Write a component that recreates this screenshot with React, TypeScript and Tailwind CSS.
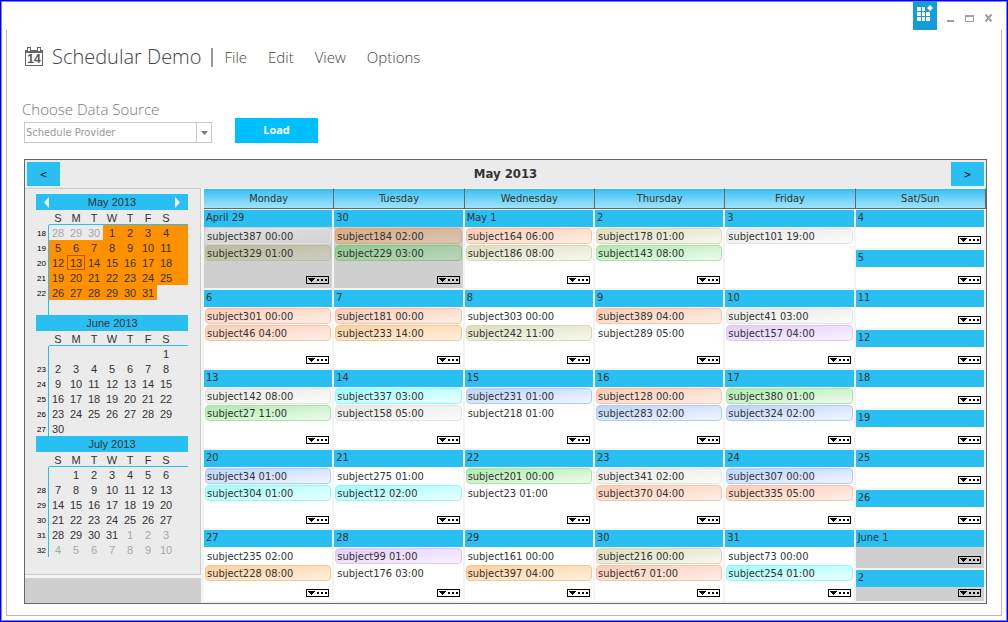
import React from "react";

type Tone =
  | "none" | "gray" | "peach" | "olive" | "green" | "orange" | "blue" | "cyan" | "violet"
  | "pastGray" | "pastOlive" | "pastOrange" | "pastGreen";

type Entry = [label: string, tone: Tone];
type Day = { label: string; entries: Entry[]; muted?: boolean; hideMore?: boolean };

const tones: Record<Tone, string> = {
  none: "border-transparent",
  gray: "border-[#e4e4de] bg-linear-to-br from-[#e9e9e5] to-[#fbfbfb]",
  peach: "border-[#ffc0a4] bg-linear-to-br from-[#ffcbb5] to-[#fff0ea]",
  olive: "border-[#d9d9b4] bg-linear-to-br from-[#dedebe] to-[#f8f8f1]",
  green: "border-[#a5e6a5] bg-linear-to-br from-[#aeeaae] to-[#effbef]",
  orange: "border-[#ffc489] bg-linear-to-br from-[#ffcf9c] to-[#fff1e2]",
  blue: "border-[#b0cbf5] bg-linear-to-br from-[#bdd3f8] to-[#f1f6fe]",
  cyan: "border-[#8ff9fa] bg-linear-to-br from-[#9cfdfd] to-[#eaffff]",
  violet: "border-[#dfc8f8] bg-linear-to-br from-[#e3cffa] to-[#f8f2fe]",
  pastGray: "border-[#e4e4e4] bg-linear-to-br from-[#e0e0e0] to-[#d3d3d3]",
  pastOlive: "border-[#bdbd98] bg-linear-to-br from-[#bcbc98] to-[#cdcdc6]",
  pastOrange: "border-[#e0a878] bg-linear-to-br from-[#e0ab7c] to-[#d3c7bc]",
  pastGreen: "border-[#84c884] bg-linear-to-br from-[#8dcd8d] to-[#c1d0c1]",
};

const weekdays = ["Monday", "Tuesday", "Wednesday", "Thursday", "Friday"];

const weeks: { days: Day[]; weekend: Day[] }[] = [
  {
    days: [
      { label: "April 29", muted: true, entries: [["subject387 00:00", "pastGray"], ["subject329 01:00", "pastOlive"]] },
      { label: "30", muted: true, entries: [["subject184 02:00", "pastOrange"], ["subject229 03:00", "pastGreen"]] },
      { label: "May 1", entries: [["subject164 06:00", "peach"], ["subject186 08:00", "olive"]] },
      { label: "2", entries: [["subject178 01:00", "olive"], ["subject143 08:00", "green"]] },
      { label: "3", hideMore: true, entries: [["subject101 19:00", "gray"]] },
    ],
    weekend: [{ label: "4", entries: [] }, { label: "5", entries: [] }],
  },
  {
    days: [
      { label: "6", entries: [["subject301 00:00", "peach"], ["subject46 04:00", "peach"]] },
      { label: "7", entries: [["subject181 00:00", "peach"], ["subject233 14:00", "orange"]] },
      { label: "8", entries: [["subject303 00:00", "none"], ["subject242 11:00", "olive"]] },
      { label: "9", entries: [["subject389 04:00", "peach"], ["subject289 05:00", "none"]] },
      { label: "10", entries: [["subject41 03:00", "gray"], ["subject157 04:00", "violet"]] },
    ],
    weekend: [{ label: "11", entries: [] }, { label: "12", entries: [] }],
  },
  {
    days: [
      { label: "13", entries: [["subject142 08:00", "gray"], ["subject27 11:00", "green"]] },
      { label: "14", entries: [["subject337 03:00", "cyan"], ["subject158 05:00", "gray"]] },
      { label: "15", entries: [["subject231 01:00", "blue"], ["subject218 01:00", "none"]] },
      { label: "16", entries: [["subject128 00:00", "peach"], ["subject283 02:00", "blue"]] },
      { label: "17", entries: [["subject380 01:00", "green"], ["subject324 02:00", "blue"]] },
    ],
    weekend: [{ label: "18", entries: [] }, { label: "19", entries: [] }],
  },
  {
    days: [
      { label: "20", entries: [["subject34 01:00", "blue"], ["subject304 01:00", "cyan"]] },
      { label: "21", entries: [["subject275 01:00", "none"], ["subject12 02:00", "cyan"]] },
      { label: "22", entries: [["subject201 00:00", "green"], ["subject23 01:00", "none"]] },
      { label: "23", entries: [["subject341 02:00", "gray"], ["subject370 04:00", "peach"]] },
      { label: "24", entries: [["subject307 00:00", "blue"], ["subject335 05:00", "peach"]] },
    ],
    weekend: [{ label: "25", entries: [] }, { label: "26", entries: [] }],
  },
  {
    days: [
      { label: "27", entries: [["subject235 02:00", "none"], ["subject228 08:00", "orange"]] },
      { label: "28", entries: [["subject99 01:00", "violet"], ["subject176 03:00", "none"]] },
      { label: "29", entries: [["subject161 00:00", "none"], ["subject397 04:00", "orange"]] },
      { label: "30", entries: [["subject216 00:00", "olive"], ["subject67 01:00", "peach"]] },
      { label: "31", entries: [["subject73 00:00", "none"], ["subject254 01:00", "cyan"]] },
    ],
    weekend: [{ label: "June 1", muted: true, entries: [] }, { label: "2", muted: true, entries: [] }],
  },
];

type Month = { title: string; weekNumbers: string[]; cells: (number | null)[]; before: number; lastIndex: number; selected?: boolean };

const range = (a: number, b: number) => Array.from({ length: b - a + 1 }, (_, i) => a + i);
const blanks = (n: number): null[] => Array.from({ length: n }, () => null);

const months: Month[] = [
  { title: "May 2013", weekNumbers: ["18", "19", "20", "21", "22", ""], cells: [28, 29, 30, ...range(1, 31), ...blanks(8)], before: 3, lastIndex: 33, selected: true },
  { title: "June 2013", weekNumbers: ["", "23", "24", "25", "26", "27"], cells: [...blanks(6), ...range(1, 30), ...blanks(6)], before: 6, lastIndex: 35 },
  { title: "July 2013", weekNumbers: ["", "28", "29", "30", "31", "32"], cells: [null, ...range(1, 31), ...range(1, 10)], before: 1, lastIndex: 31 },
];

function MiniMonth({ month }: { month: Month }) {
  return (
    <section className="text-[#333]">
      <div className="flex h-4 items-center justify-between bg-[#29bff2] px-[6px] text-[11px] leading-4">
        {month.selected ? (
          <button aria-label="Previous month" className="h-4 w-2">
            <svg viewBox="0 0 8 16" className="h-4 w-2"><path d="M7 3v11L2 8.500z" fill="#fff" /></svg>
          </button>
        ) : <span className="w-2" />}
        <h2>{month.title}</h2>
        {month.selected ? (
          <button aria-label="Next month" className="h-4 w-2">
            <svg viewBox="0 0 8 16" className="h-4 w-2"><path d="M1 3v11l5-5.500z" fill="#fff" /></svg>
          </button>
        ) : <span className="w-2" />}
      </div>
      <table className="w-full table-fixed border-separate border-spacing-0 text-center text-[11px] leading-[13px]">
        <colgroup>
          <col className="w-[13px]" />
          {range(0, 6).map((i) => <col key={i} className="w-[18px]" />)}
          <col />
        </colgroup>
        <thead>
          <tr>
            <th className="h-[15px] p-0" />
            {["S", "M", "T", "W", "T", "F", "S"].map((d, i) => (
              <th key={i} className="h-[15px] border-b border-[#29bff2] p-0 pt-[2px] leading-3 font-normal">{d}</th>
            ))}
            <th className="border-b border-[#29bff2] p-0" />
          </tr>
        </thead>
        <tbody>
          {range(0, 5).map((r) => (
            <tr key={r}>
              <th className="h-[15px] border-r border-[#29bff2] p-0 pt-[2px] pl-px text-left text-[8px] leading-[13px] font-normal text-black">{month.weekNumbers[r]}</th>
              {range(0, 6).map((c) => {
                const i = r * 7 + c;
                const day = month.cells[i];
                const inside = i >= month.before && i <= month.lastIndex;
                const marked = month.selected && inside;
                const today = marked && day === 13;
                return (
                  <td
                    key={c}
                    className={`h-[15px] p-0 pt-[2px] ${marked ? "bg-[#ff9100]" : ""} ${inside ? "" : "text-[#a8a8a8]"} ${today ? "outline-1 -outline-offset-1 outline-[#c05000]" : ""}`}
                  >
                    {day}
                  </td>
                );
              })}
              <td className={`p-0 ${month.selected && r < 4 ? "bg-[#ff9100]" : ""}`} />
            </tr>
          ))}
        </tbody>
      </table>
    </section>
  );
}

function MoreButton({ day }: { day: string }) {
  return (
    <button aria-label={`More for ${day}`} className="block h-2 w-[23px]">
      <svg viewBox="0 0 23 8" className="h-2 w-[23px]" shapeRendering="crispEdges">
        <rect x="0.5" y="0.5" width="22" height="7" fill="none" stroke="#000" />
        <path d="M2 2h7v1H8v1H7v1H6v1H5V5H4V4H3V3H2zM11 3h2v2h-2zM15 3h2v2h-2zM19 3h2v2h-2z" fill="#000" />
      </svg>
    </button>
  );
}

function DayCell({ day, height }: { day: Day; height: string }) {
  return (
    <div className={`flex flex-col border-r-2 border-b-2 border-[#f4f4f4] ${height} ${day.muted ? "bg-[#cfcfcf]" : "bg-white"}`}>
      <div className="h-[17px] shrink-0 bg-[#29bff2] px-[2px] text-[11px] leading-4">{day.label}</div>
      <div className="flex min-h-0 flex-1 flex-col px-px pt-px">
        {day.entries.map(([label, tone]) => (
          <div key={label} className={`mb-px h-4 shrink-0 truncate rounded-[4px] border px-px text-[11px] leading-[15px] ${tones[tone]}`}>{label}</div>
        ))}
        {!day.hideMore && (
          <div className="mt-auto flex justify-end pr-[2px] pb-1">
            <MoreButton day={day.label} />
          </div>
        )}
      </div>
    </div>
  );
}

function Scheduler() {
  return (
    <section className="border border-[#666] bg-[#f4f4f4] font-['DejaVu_Sans_Condensed','DejaVu_Sans',sans-serif] text-[#333]">
      <header className="flex h-7 items-center justify-between bg-[#ebebeb] px-[2px]">
        <button className="h-6 w-[33px] bg-[#29bff2] text-[10px] text-black">&lt;</button>
        <h1 className="text-[13px] font-bold">May 2013</h1>
        <button className="h-6 w-[33px] bg-[#29bff2] text-[10px] text-black">&gt;</button>
      </header>
      <div className="flex">
        <aside className="flex w-[179px] shrink-0 flex-col pr-[3px] font-['Liberation_Sans',Arial,sans-serif]">
          <div className="h-[387px] border-y border-r border-[#ccc] bg-[#ebebeb] pt-[5px] pr-3 pl-[11px]">
            {months.map((m) => <MiniMonth key={m.title} month={m} />)}
          </div>
          <div className="mt-[3px] flex-1 bg-[#cfcfcf]" />
        </aside>
        <div className="min-w-0 flex-1">
          <table className="w-full table-fixed border-separate border-spacing-0">
            <thead>
              <tr>
                {[...weekdays, "Sat/Sun"].map((d) => (
                  <th key={d} className="p-0 pb-px text-center text-[11px] font-normal">
                    <div className="h-[21px] border-t border-r border-b border-t-white border-r-[#666] border-b-[#666] bg-linear-to-b from-[#29bff2] to-[#9fe3fa] leading-[19px]">{d}</div>
                  </th>
                ))}
              </tr>
            </thead>
            <tbody>
              {weeks.map((week, w) => {
                const last = w === weeks.length - 1;
                return (
                  <tr key={w} className="align-top">
                    {week.days.map((d) => (
                      <td key={d.label} className="p-0"><DayCell day={d} height={last ? "h-[73px]" : "h-20"} /></td>
                    ))}
                    <td className="p-0">
                      <DayCell day={week.weekend[0]} height="h-10" />
                      <DayCell day={week.weekend[1]} height={last ? "h-[33px]" : "h-10"} />
                    </td>
                  </tr>
                );
              })}
            </tbody>
          </table>
        </div>
      </div>
    </section>
  );
}

export default function App() {
  return (
    <div className="flex min-h-screen flex-col border border-[#0000ff] bg-white font-['Open_Sans',sans-serif]">
      <div className="flex flex-1 flex-col border border-[#7f7fff] px-1 pb-1">
        <div className="-mt-px flex h-[29px] items-start justify-end gap-[10px] pr-[9px] text-[#a0a0a0]">
          <button aria-label="Apps" className="h-[29px] w-6 bg-[#149ddb]">
            <svg viewBox="0 0 24 29" className="h-[29px] w-6" fill="#fff">
              <path d="M4 6h4v4H4zM9 6h3v4H9zM4 11h4v4H4zM9 11h3v4H9zM13 11h4v4h-4zM4 16h4v4H4zM9 16h3v4H9zM13 16h4v4h-4zM17 4l3 3-3 3-3-3z" />
            </svg>
          </button>
          <button aria-label="Minimize" className="h-[29px] w-2">
            <svg viewBox="0 0 8 29" className="h-[29px] w-2"><path d="M0 19h7v2H0z" fill="currentColor" /></svg>
          </button>
          <button aria-label="Maximize" className="h-[29px] w-[10px]">
            <svg viewBox="0 0 10 29" className="h-[29px] w-[10px]"><path d="M0 14h9v7H0zM1 16v4h7v-4z" fill="currentColor" fillRule="evenodd" /></svg>
          </button>
          <button aria-label="Close" className="h-[29px] w-2">
            <svg viewBox="0 0 8 29" className="h-[29px] w-2"><path d="M0.500 13.500l6 7M6.500 13.500l-6 7" stroke="currentColor" strokeWidth="2" /></svg>
          </button>
        </div>
        <main className="flex-1 border-x border-b border-[#b8b8b8] pt-[11px] pr-[14px] pb-[11px] pl-[17px]">
          <nav className="flex h-8 items-center text-[#444]">
            <svg viewBox="0 0 18 20" className="ml-px h-5 w-[18px]" aria-hidden="true">
              <path d="M0 3h2V0h4v3h6V0h4v3h2v16H0zM1 6v12h16V6zM3 1v3h2V1zM13 1v3h2V1z" fill="#666" fillRule="evenodd" />
              <text x="9" y="16" textAnchor="middle" fontFamily="Liberation Sans" fontWeight="700" fontSize="12" fill="#555">14</text>
            </svg>
            <div className="ml-[9px] text-xl leading-8 font-light whitespace-nowrap">Schedular Demo</div>
            <div className="mr-3 ml-[9px] h-[19px] w-[2px] bg-[#999]" />
            <div className="flex gap-[21px] text-[15px] leading-8 font-light">
              <button>File</button>
              <button>Edit</button>
              <button>View</button>
              <button>Options</button>
            </div>
          </nav>
          <form className="mt-[26px] mb-4 flex items-end gap-[23px]">
            <div>
              <label htmlFor="source" className="-ml-[2px] block h-[23px] text-[15px] leading-5 font-light text-[#777]">Choose Data Source</label>
              <div className="relative">
                <select id="source" className="block h-[21px] w-[188px] appearance-none border border-[#c8c8c8] bg-white pt-[2px] pl-px font-['DejaVu_Sans_Condensed','DejaVu_Sans',sans-serif] text-[11px] text-[#999]">
                  <option>Schedule Provider</option>
                </select>
                <span className="pointer-events-none absolute inset-y-0 right-0 flex w-4 items-center justify-center border-l border-[#c8c8c8]">
                  <svg viewBox="0 0 7 4" className="h-1 w-[7px]"><path d="M0 0h7L3.500 4z" fill="#777" /></svg>
                </span>
              </div>
            </div>
            <button type="button" className="h-[25px] w-[83px] bg-[#00bfff] text-[11px] font-bold text-white">Load</button>
          </form>
          <Scheduler />
        </main>
      </div>
    </div>
  );
}
